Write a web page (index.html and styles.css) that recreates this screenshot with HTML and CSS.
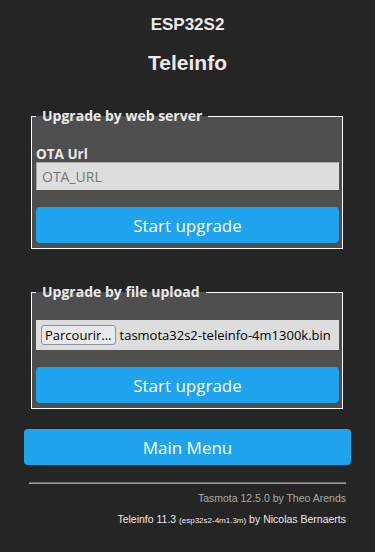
FILE: index.html
```html
<!DOCTYPE html>
<html lang="fr">
<head>
    <meta charset="UTF-8">
    <meta name="viewport" content="width=device-width, initial-scale=1.0">
    <title>ESP32S2 - Firmware upgrade</title>
    <link rel="stylesheet" href="styles.css">
</head>
<body>
    <div class="page">
        <div class="header">
            <h3 class="device">ESP32S2</h3>
            <h2 class="name">Teleinfo</h2>
        </div>

        <fieldset class="box box-web">
            <legend class="box-title">Upgrade by web server</legend>
            <form class="box-form">
                <label class="field-label" for="otaUrl">OTA Url</label>
                <input class="field-input" id="otaUrl" type="text" placeholder="OTA_URL">
                <button class="btn" type="button">Start upgrade</button>
            </form>
        </fieldset>

        <fieldset class="box box-file">
            <legend class="box-title">Upgrade by file upload</legend>
            <form class="box-form">
                <div class="file-row">
                    <span class="file-btn">Parcourir...</span>
                    <span class="file-name">tasmota32s2-teleinfo-4m1300k.bin</span>
                </div>
                <button class="btn" type="button">Start upgrade</button>
            </form>
        </fieldset>

        <button class="btn btn-main" type="button">Main Menu</button>

        <div class="footer">
            <hr class="footer-line">
            <div class="footer-tasmota">Tasmota 12.5.0 by Theo Arends</div>
            <div class="footer-teleinfo">Teleinfo 11.3 <small>(esp32s2-4m1.3m)</small> by Nicolas Bernaerts</div>
        </div>
    </div>
</body>
</html>
```

FILE: styles.css
```css
* {
    margin: 0;
    padding: 0;
    box-sizing: border-box;
}

body {
    background: #252525;
    color: #eaeaea;
    font-family: "Open Sans", "Noto Sans", sans-serif;
}

.page {
    width: 327px;
    margin: 0 auto;
    padding-top: 14px;
}

.header {
    text-align: center;
    font-family: "Liberation Sans", Arial, sans-serif;
    font-weight: 700;
}

.device {
    font-size: 17px;
    line-height: 22px;
}

.name {
    font-size: 21px;
    line-height: 26px;
    margin-top: 14px;
}

.box {
    margin: 31px 8px 0 7px;
    background: #4f4f4f;
    border: 1px solid #ffffff;
    padding: 0 3px 5px 4px;
}

.box-file {
    margin-top: 34px;
}

.box-title {
    padding: 0 6px;
    font-size: 14px;
    font-weight: 700;
    line-height: 18px;
}

.box-form {
    display: flex;
    flex-direction: column;
}

.field-label {
    font-size: 13.5px;
    font-weight: 700;
    line-height: 16px;
    margin-top: 21px;
}

.field-input {
    height: 28px;
    background: #dddddd;
    border: 1px solid #a8a8a8;
    border-right-color: #dddddd;
    border-bottom-color: #dddddd;
    padding: 0 5px;
    font-family: "Open Sans", "Noto Sans", sans-serif;
    font-size: 14px;
    color: #000;
}

.field-input::placeholder {
    color: #777777;
}

.file-row {
    margin-top: 19px;
    height: 30px;
    background: #dddddd;
    display: flex;
    align-items: center;
    gap: 4px;
    padding: 0 5px;
    color: #000;
    font-size: 13px;
}

.file-btn {
    height: 20px;
    line-height: 18px;
    padding: 0 3px;
    background: #e9e9ed;
    border: 1px solid #8f8f9d;
    border-radius: 3px;
}

.file-name {
    white-space: nowrap;
}

.btn {
    height: 36px;
    margin-top: 17px;
    border: none;
    border-radius: 4px;
    background: #1fa3ec;
    color: #ffffff;
    font-family: "Open Sans", "Noto Sans", sans-serif;
    font-size: 17px;
    cursor: pointer;
}

.btn-main {
    display: block;
    width: 100%;
    margin-top: 20px;
}

.footer {
    padding: 0 5px;
    text-align: right;
    font-family: "Liberation Sans", Arial, sans-serif;
    font-size: 10.5px;
}

.footer-line {
    margin-top: 17px;
    border: none;
    border-top: 1px solid #6f6f6f;
    border-bottom: 1px solid #a0a0a0;
}

.footer-tasmota {
    color: #aaaaaa;
    margin-top: 7px;
    line-height: 14px;
}

.footer-teleinfo {
    margin-top: 7px;
    line-height: 14px;
}

.footer-teleinfo small {
    font-size: 8px;
}
```
